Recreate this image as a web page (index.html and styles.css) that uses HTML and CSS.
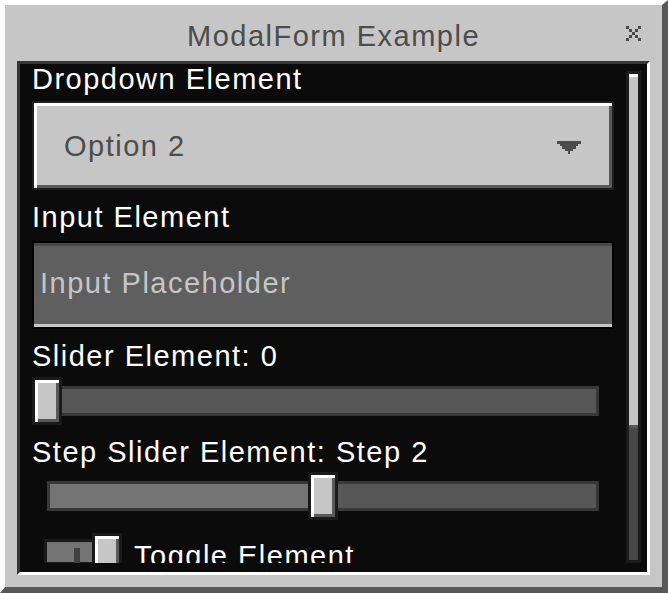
FILE: index.html
```html
<!DOCTYPE html>
<html lang="en">
<head>
    <meta charset="UTF-8">
    <meta name="viewport" content="width=device-width, initial-scale=1.0">
    <title>ModalForm Example</title>
    <link rel="stylesheet" href="styles.css">
</head>
<body>

<div class="modal">
    <div class="modal-header">
        <span></span>
        <h1 class="modal-title">ModalForm Example</h1>
        <button class="close-btn" aria-label="Close">
            <svg width="15" height="15" viewBox="0 0 5 5" shape-rendering="crispEdges">
                <path d="M0 0h1v1H0zM4 0h1v1H4zM1 1h1v1H1zM3 1h1v1H3zM2 2h1v1H2zM1 3h1v1H1zM3 3h1v1H3zM0 4h1v1H0zM4 4h1v1H4z" fill="#4c4c4c"/>
            </svg>
        </button>
    </div>

    <div class="modal-body">
        <div class="form-scroll">
            <label class="field-label first">Dropdown Element</label>
            <div class="dropdown">
                <span>Option 2</span>
                <svg class="dropdown-arrow" width="24" height="13" viewBox="0 0 9 5" preserveAspectRatio="none" shape-rendering="crispEdges">
                    <path d="M0 0h9v1H0zM1 1h7v1H1zM2 2h5v1H2zM3 3h3v1H3zM4 4h1v1H4z" fill="#4c4c4c"/>
                </svg>
            </div>

            <label class="field-label" for="input">Input Element</label>
            <input class="text-input" type="text" id="input" placeholder="Input Placeholder">

            <label class="field-label">Slider Element: 0</label>
            <div class="slider slider-first">
                <div class="slider-track"><div class="slider-fill" style="width: 0%"></div></div>
                <div class="slider-thumb" style="left: 0%"></div>
            </div>

            <label class="field-label">Step Slider Element: Step 2</label>
            <div class="slider slider-step">
                <div class="slider-track"><div class="slider-fill" style="width: 50%"></div></div>
                <div class="slider-thumb" style="left: 50%"></div>
            </div>

            <div class="toggle">
                <div class="toggle-switch">
                    <div class="toggle-track"><span class="toggle-notch"></span></div>
                    <div class="toggle-knob"></div>
                </div>
                <span class="toggle-label">Toggle Element</span>
            </div>
        </div>

        <div class="scrollbar">
            <div class="scroll-track">
                <div class="scroll-thumb"></div>
            </div>
        </div>
    </div>
</div>

</body>
</html>
```

FILE: styles.css
```css
* {
    box-sizing: border-box;
}
body {
    margin: 0;
    font-family: "Liberation Sans", Arial, sans-serif;
    background-color: #fff;
}
.modal {
    width: 668px;
    height: 593px;
    display: flex;
    flex-direction: column;
    background-color: #c6c6c6;
    border-top: 5px solid #fff;
    border-left: 5px solid #fff;
    border-right: 6px solid #585858;
    border-bottom: 6px solid #585858;
    padding: 0 12px 12px 12px;
}
.modal-header {
    height: 56px;
    flex-shrink: 0;
    display: grid;
    grid-template-columns: 1fr auto 1fr;
    align-items: start;
}
.modal-title {
    margin: 16px 0 0;
    font-size: 29px;
    font-weight: normal;
    line-height: 30px;
    letter-spacing: 1.5px;
    color: #4c4c4c;
}
.close-btn {
    justify-self: end;
    margin: 21px 9px 0 0;
    padding: 0;
    border: none;
    background: none;
    width: 15px;
    height: 15px;
    display: block;
    cursor: pointer;
}
.close-btn svg {
    display: block;
}
.modal-body {
    flex: 1;
    min-height: 0;
    display: flex;
    background-color: #0b0b0b;
    border-top: 3px solid #373737;
    border-left: 3px solid #373737;
    border-right: 3px solid #fff;
    border-bottom: 3px solid #fff;
    padding: 0 6px 9px 12px;
}
.form-scroll {
    flex: 1;
    overflow: hidden;
}
.field-label {
    display: block;
    margin-top: 12px;
    font-size: 29px;
    line-height: 30px;
    letter-spacing: 1.5px;
    color: #fff;
}
.field-label.first {
    margin-top: 0;
}
.dropdown {
    margin-top: 7px;
    height: 89px;
    display: flex;
    align-items: center;
    justify-content: space-between;
    padding: 0 31px 0 30px;
    border: 2px solid #1e1e1e;
    background-color: #c6c6c6;
    box-shadow: inset 3px 3px 0 #fff, inset -3px -3px 0 #585858;
    font-size: 29px;
    line-height: 30px;
    letter-spacing: 1.5px;
    color: #4c4c4c;
}
.dropdown-arrow {
    display: block;
    margin-top: 4px;
}
.text-input {
    display: block;
    width: 100%;
    margin-top: 9px;
    height: 88px;
    padding: 0 6px 4px 6px;
    border: 2px solid #000;
    background-color: #5f5f5f;
    box-shadow: inset 0 3px 0 #484848, inset 0 -3px 0 #c6c6c6;
    font-family: "Liberation Sans", Arial, sans-serif;
    font-size: 29px;
    letter-spacing: 1.5px;
    color: #fff;
    outline: none;
}
.text-input::placeholder {
    color: #c6c6c6;
    opacity: 1;
}
.slider {
    position: relative;
    height: 48px;
    margin: 6px 15px 0;
    display: flex;
    align-items: center;
}
.slider-step {
    margin-top: 5px;
}
.slider-track {
    width: 100%;
    height: 30px;
    border: 3px solid #383838;
    background-color: #575757;
}
.slider-fill {
    height: 100%;
    background-color: #747474;
}
.slider-thumb {
    position: absolute;
    top: 0;
    width: 30px;
    height: 48px;
    margin-left: -15px;
    border: 3px solid #1a1a1a;
    background-color: #c6c6c6;
    box-shadow: inset 3px 3px 0 #fff, inset -3px -3px 0 #585858;
}
.toggle {
    display: flex;
    align-items: center;
    height: 38px;
    margin: 13px 0 0 12px;
}
.toggle-switch {
    display: flex;
    align-items: center;
}
.toggle-track {
    position: relative;
    width: 51px;
    height: 26px;
    border: 3px solid #1a1a1a;
    background-color: #747474;
}
.toggle-notch {
    position: absolute;
    left: 27px;
    top: 6px;
    width: 6px;
    height: 17px;
    background-color: #404040;
}
.toggle-knob {
    position: relative;
    width: 30px;
    height: 38px;
    margin-left: -3px;
    border: 3px solid #1a1a1a;
    background-color: #c6c6c6;
    box-shadow: inset 3px 3px 0 #fff, inset -3px -3px 0 #585858;
}
.toggle-label {
    margin-left: 12px;
    padding-top: 7px;
    font-size: 29px;
    line-height: 30px;
    letter-spacing: 1.5px;
    color: #fff;
    white-space: nowrap;
}
.scrollbar {
    width: 15px;
    margin: 7px 0 0 12px;
    padding: 3px;
    background-color: #1c1c1c;
    display: flex;
    flex-direction: column;
}
.scroll-track {
    flex: 1;
    background-color: #474747;
}
.scroll-thumb {
    height: 354px;
    background-color: #c6c6c6;
    border-top: 3px solid #fff;
    border-bottom: 3px solid #585858;
}
```
